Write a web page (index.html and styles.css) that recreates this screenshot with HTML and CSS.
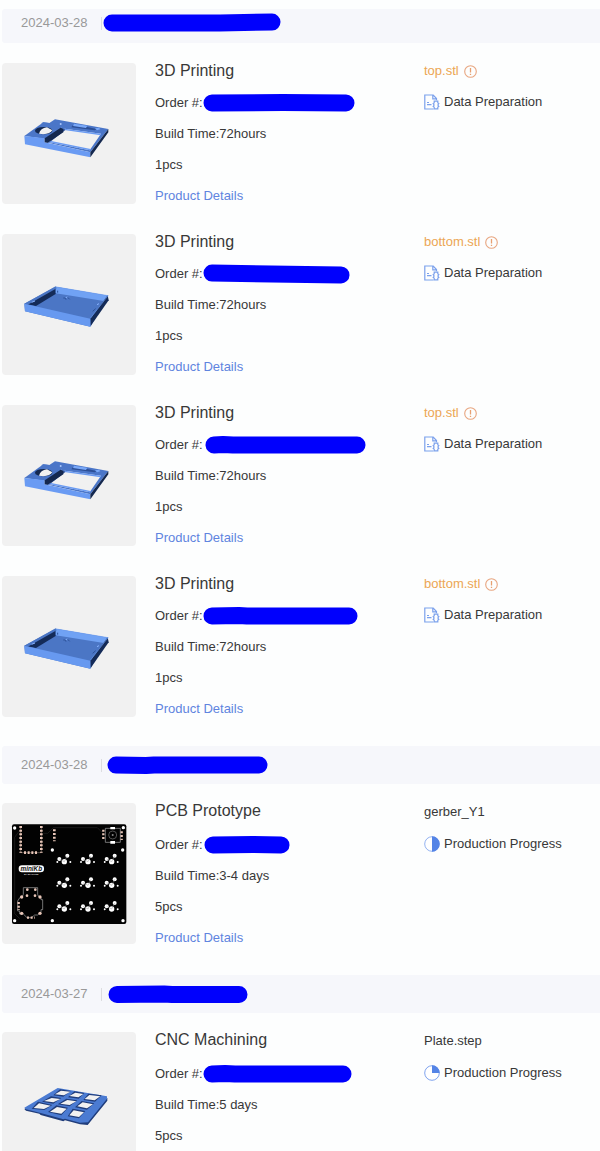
FILE: index.html
```html
<!DOCTYPE html>
<html lang="en">
<head>
<meta charset="utf-8">
<meta name="viewport" content="width=device-width, initial-scale=1">
<title>Orders</title>
<link rel="stylesheet" href="styles.css">
</head>
<body>
<svg class="sprite" aria-hidden="true">
  <symbol id="case-top" viewBox="6 -141 402 423">
    <path fill="#4b76c8" fill-rule="evenodd" d="M134 96 185 52 123 40 130 37 148 39 165 28 325 57 271 127zM146 96 194 56 303 71 269 121z"/>
    <path fill="#6a9bf3" d="M146 96 150 92 272 117 269 121zM194 56 303 71 302 76 192 60z"/>
    <path fill="#2c4f96" d="M192 56 196 60 153 94 146 96zM214 52 219 45 262 51 290 57 284 61z"/>
    <path fill="#4b76c8" d="M73 78 130 37 148 39 186 46 184 56 134 86z"/>
    <path fill="#6a9bf3" d="M73 78 134 85V97L271 127V142L75 103z"/>
    <path fill="#14284f" d="M134 85 182 53 190 57V67L143 98 134 97zM325 57V67L271 142V127z"/>
    <ellipse cx="131" cy="62" rx="26" ry="11" fill="#14284f"/>
    <path fill="#f1f1f1" d="M117 71Q121 55 141 52L157 61Q151 71 130 73z"/>
    <path fill="#79a8f8" d="M222 41 262 47 258 54 219 48zM285 55l12-2 4 5-10 3z"/>
    <circle cx="182" cy="42" r="3" fill="#a9c6fc"/>
  </symbol>
  <symbol id="case-bottom" viewBox="6 -108 402 423">
    <path fill="#4b76c5" d="M73 101 167 50 325 77 271 170 75 124z"/>
    <path fill="#142b58" d="M78 102 167 54 167 72 108 108z"/>
    <path fill="#70a2f4" d="M167 50 325 77 316 94 167 70z"/>
    <path fill="#142b58" d="M323 76 326 91 272 168 271 146z"/>
    <path fill="#4b76c5" d="M73 101 167 49 170 55 82 105z"/>
    <path fill="#6799f0" d="M73 101 271 146 271 170 75 124z"/>
    <path fill="none" stroke="#6d9df0" stroke-width="2" d="M169 51 324 77 271 145"/>
    <path fill="none" stroke="#2d529a" stroke-width="3" d="M190 84h6l2 5M203 82l6 6M173 62v6M278 124l9-8"/>
    <path fill="none" stroke="#8ab4ff" stroke-width="3" d="M197 83l5-2M291 104l6-3M95 97l10-4"/>
  </symbol>
  <symbol id="plate" viewBox="6 -111 402 423">
    <path fill="#203d7b" d="M73 120 173 60 322 87 322 95 263 168 240 166 195 154 190 157 122 138 118 134 78 125z"/>
    <path fill="#4b7bd2" d="M73 116 173 57 321 82 321 89 264 160 240 161 195 149 190 151 122 132 78 121z"/>
    <g fill="#203d7b">
      <path d="M180 61 212 66 190 83 160 79zM223 67 253 72 236 89 204 85zM265 74 305 79 285 98 250 93z"/>
      <path d="M153 82 184 87 160 104 126 98zM199 89 232 94 209 112 173 106zM245 96 283 103 261 122 225 115z"/>
      <path d="M114 98 157 108 133 123 95 119zM169 109 204 116 184 139 144 129zM218 119 256 126 237 148 203 142z"/>
    </g>
    <g fill="#f1f1f1">
      <path d="M183 65 211 68 192 79 165 76zM226 71 250 75 235 85 208 81zM268 78 301 82 284 94 254 90z"/>
      <path d="M155 87 181 90 160 100 132 96zM202 93 229 97 209 108 181 104zM248 100 279 106 261 118 232 112z"/>
      <path d="M117 103 152 110 132 120 101 117zM171 114 200 119 184 134 150 128zM221 124 252 130 237 144 208 139z"/>
    </g>
  </symbol>
  <symbol id="switch" viewBox="0 0 50 40">
    <g fill="#fff"><circle cx="10" cy="18" r="6"/><circle cx="34" cy="8" r="6"/><circle cx="25" cy="26" r="8"/><circle cx="4" cy="27" r="3"/><circle cx="43" cy="27" r="3"/></g>
    <path fill="none" stroke="#999" stroke-width="1.5" d="M10 18 25 26 34 8"/>
  </symbol>
  <symbol id="warn" viewBox="0 0 13 13">
    <circle cx="6.5" cy="6.5" r="5.8" fill="none" stroke="#e8a680" stroke-width="1.1"/>
    <path stroke="#e8a070" stroke-width="1.3" d="M6.5 3v4.600M6.500 8.800v1.300"/>
  </symbol>
  <symbol id="prep" viewBox="0 0 16 16">
    <g fill="none" stroke="#7ba1ec" stroke-width="1.2">
      <path d="M9.500 15H.8V1h8.400l3.300 3.500v1.800M8.800 1v3.800h3.700"/>
      <path d="M3 8.500h2M3 10.600h4.500"/>
      <path d="M10.200 7.200h3.600v1.700l1 .6-.9 1.500.9 1.500-1 .6v1.700h-3.600v-1.700l-1-.6.9-1.500-.9-1.500 1-.6z"/>
    </g>
  </symbol>
  <symbol id="half" viewBox="0 0 16 16">
    <circle cx="8" cy="8" r="7.300" fill="#fff" stroke="#93b2f1" stroke-width="1"/><path fill="#5484e6" d="M8 .3a7.700 7.700 0 0 1 0 15.400z"/>
  </symbol>
  <symbol id="quarter" viewBox="0 0 16 16">
    <circle cx="8" cy="8" r="7.300" fill="#fff" stroke="#7fa3ee" stroke-width="1"/><path fill="#5484e6" d="M8 .3A7.700 7.700 0 0 1 15.700 8H8z"/>
  </symbol>
</svg>

<main class="page">
  <section class="group">
    <header class="bar bar-first">
      <time class="date">2024-03-28</time><i class="divider"></i>
      <svg class="mark" width="180" height="20"><path d="M10 10H118L170 9"/></svg>
    </header>
    <article class="item">
      <div class="thumb"><svg><use href="#case-top"/></svg></div>
      <div class="lines">
        <h2 class="title">3D Printing</h2>
        <p class="order">Order #:<svg class="mark" width="152" height="20"><path d="M9 10 80 9.500 143 10"/></svg></p>
        <p>Build Time:72hours</p><p>1pcs</p><a class="link" href="#">Product Details</a>
      </div>
      <div class="lines">
        <p class="file alert">top.stl<svg class="warn"><use href="#warn"/></svg></p>
        <p class="status"><svg class="icon"><use href="#prep"/></svg>Data Preparation</p>
      </div>
    </article>
    <article class="item">
      <div class="thumb"><svg><use href="#case-bottom"/></svg></div>
      <div class="lines">
        <h2 class="title">3D Printing</h2>
        <p class="order">Order #:<svg class="mark" width="147" height="20"><path d="M9 9 138 11"/></svg></p>
        <p>Build Time:72hours</p><p>1pcs</p><a class="link" href="#">Product Details</a>
      </div>
      <div class="lines">
        <p class="file alert">bottom.stl<svg class="warn"><use href="#warn"/></svg></p>
        <p class="status"><svg class="icon"><use href="#prep"/></svg>Data Preparation</p>
      </div>
    </article>
    <article class="item">
      <div class="thumb"><svg><use href="#case-top"/></svg></div>
      <div class="lines">
        <h2 class="title">3D Printing</h2>
        <p class="order">Order #:<svg class="mark" width="163" height="20"><path d="M11 10 20 9.500 30 10H154"/></svg></p>
        <p>Build Time:72hours</p><p>1pcs</p><a class="link" href="#">Product Details</a>
      </div>
      <div class="lines">
        <p class="file alert">top.stl<svg class="warn"><use href="#warn"/></svg></p>
        <p class="status"><svg class="icon"><use href="#prep"/></svg>Data Preparation</p>
      </div>
    </article>
    <article class="item">
      <div class="thumb"><svg><use href="#case-bottom"/></svg></div>
      <div class="lines">
        <h2 class="title">3D Printing</h2>
        <p class="order">Order #:<svg class="mark" width="155" height="20"><path d="M9 10 36 9.500 44 10H146"/></svg></p>
        <p>Build Time:72hours</p><p>1pcs</p><a class="link" href="#">Product Details</a>
      </div>
      <div class="lines">
        <p class="file alert">bottom.stl<svg class="warn"><use href="#warn"/></svg></p>
        <p class="status"><svg class="icon"><use href="#prep"/></svg>Data Preparation</p>
      </div>
    </article>
  </section>

  <section class="group">
    <header class="bar">
      <time class="date">2024-03-28</time><i class="divider"></i>
      <svg class="mark" width="167" height="20"><path d="M14 10 44 10.500 52 10H157"/></svg>
    </header>
    <article class="item roomy">
      <div class="thumb">
        <svg viewBox="6 9 402 423">
          <rect x="36" y="73" width="343" height="299" rx="6" fill="#020202"/>
          <path fill="none" stroke="#252525" stroke-width="2" d="M44 342V112l13-18M130 100h13l17-17h132l14 14M45 342l14 14"/>
          <path fill="none" stroke="#806f67" stroke-width="2" d="M62 78V158H124V78"/>
          <path fill="none" stroke="#e7c5b7" stroke-width="8" stroke-dasharray="6 5" d="M62 78V158M124 78V158M72 158H116M163 88V124"/>
          <path fill="none" stroke="#aaa" stroke-width="2" d="M316 85H361V127H316z"/>
          <path fill="none" stroke="#e7c5b7" stroke-width="7" stroke-dasharray="6 5" d="M310 89V120M365 94V120"/>
          <path fill="#fff" d="M331 81h14v7h-14zM331 123h14v8h-14z"/>
          <circle cx="338" cy="105" r="12" fill="none" stroke="#777" stroke-width="2"/><circle cx="338" cy="105" r="3" fill="#888"/>
          <path fill="none" stroke="#aaa" stroke-width="2" d="M70 283V263H113V283Q113 290 123 293V299H128V329H123V337L113 345H104L94 353H81L70 342H59V333H53V303L60 292Q70 290 70 283"/>
          <path fill="none" stroke="#e7c5b7" stroke-width="7" stroke-dasharray="6 5" d="M56 306V330M81 353H105"/>
          <g fill="#e7c5b7"><circle cx="82" cy="269" r="4"/><circle cx="106" cy="269" r="4"/><circle cx="81" cy="287" r="4"/><circle cx="105" cy="287" r="4"/><circle cx="65" cy="291" r="5"/><circle cx="120" cy="291" r="5"/><circle cx="65" cy="340" r="5"/><circle cx="120" cy="340" r="5"/></g>
          <g fill="#fff"><circle cx="44" cy="84" r="5"/><circle cx="370" cy="83" r="5"/><circle cx="44" cy="362" r="5"/><circle cx="369" cy="362" r="5"/><circle cx="157" cy="150" r="5"/><circle cx="368" cy="150" r="5"/><circle cx="157" cy="362" r="5"/></g>
          <rect x="56" y="196" width="76" height="21" rx="10" fill="#fff"/>
          <text x="94" y="213" class="pcb-logo">miniKb</text>
          <text x="94" y="226" class="pcb-sub">BY MACHINE</text>
          <use href="#switch" x="168" y="159" width="50" height="40"/><use href="#switch" x="239" y="159" width="50" height="40"/><use href="#switch" x="310" y="159" width="50" height="40"/>
          <use href="#switch" x="168" y="230" width="50" height="40"/><use href="#switch" x="239" y="230" width="50" height="40"/><use href="#switch" x="310" y="230" width="50" height="40"/>
          <use href="#switch" x="168" y="301" width="50" height="40"/><use href="#switch" x="239" y="301" width="50" height="40"/><use href="#switch" x="310" y="301" width="50" height="40"/>
        </svg>
      </div>
      <div class="lines">
        <h2 class="title">PCB Prototype</h2>
        <p class="order">Order #:<svg class="mark" width="87" height="20"><path d="M10 10 50 9.500 78 10"/></svg></p>
        <p>Build Time:3-4 days</p><p>5pcs</p><a class="link" href="#">Product Details</a>
      </div>
      <div class="lines">
        <p class="file">gerber_Y1</p>
        <p class="status"><svg class="icon"><use href="#half"/></svg>Production Progress</p>
      </div>
    </article>
  </section>

  <section class="group">
    <header class="bar">
      <time class="date">2024-03-27</time><i class="divider"></i>
      <svg class="mark" width="147" height="20"><path d="M15 10.500 62 10 70 10.500H137"/></svg>
    </header>
    <article class="item roomy">
      <div class="thumb"><svg><use href="#plate"/></svg></div>
      <div class="lines">
        <h2 class="title">CNC Machining</h2>
        <p class="order">Order #:<svg class="mark" width="149" height="20"><path d="M9 10 22 9.500 32 10H140"/></svg></p>
        <p>Build Time:5 days</p><p>5pcs</p>
      </div>
      <div class="lines">
        <p class="file">Plate.step</p>
        <p class="status"><svg class="icon"><use href="#quarter"/></svg>Production Progress</p>
      </div>
    </article>
  </section>
</main>
</body>
</html>
```
FILE: styles.css
```css
* { box-sizing: border-box; }

body {
  margin: 0;
  background: #fdfefe;
  color: #383838;
  font: 13px/16px "Liberation Sans", Arial, sans-serif;
}

h2, p { margin: 0; }

.sprite {
  position: absolute;
  width: 0;
  height: 0;
}

.page {
  height: 100vh;
  overflow: hidden;
  padding: 9px 0 0 2px;
}

.group { margin-bottom: 29px; }

.bar {
  display: flex;
  align-items: center;
  height: 38px;
  margin-bottom: 19px;
  padding-left: 19px;
  border-radius: 3px 0 0 3px;
  background: #f6f7fb;
}

.bar-first {
  height: 34px;
  padding-bottom: 6px;
  margin-bottom: 20px;
}

.date {
  width: 80px;
  color: #999;
}

.divider {
  width: 1px;
  height: 13px;
  background: #dcdde0;
}

.mark {
  flex: none;
  fill: none;
  stroke: #0000fd;
  stroke-width: 17px;
  stroke-linecap: round;
  stroke-linejoin: round;
}

.item {
  display: grid;
  grid-template-columns: 134px 1fr 176px;
  align-items: start;
}

.item + .item { margin-top: 30px; }

.thumb {
  height: 141px;
  border-radius: 4px;
  background: #f1f1f1;
  overflow: hidden;
}

.thumb svg {
  display: block;
  width: 100%;
  height: 100%;
}

.lines {
  display: flex;
  flex-direction: column;
  align-items: flex-start;
  gap: 15px;
}

.thumb + .lines { padding-left: 19px; }

.title {
  font-size: 16px;
  font-weight: 400;
}

.order, .file, .status {
  display: flex;
  align-items: center;
  height: 16px;
}

.order { height: 17px; }

.roomy .title, .roomy .file { height: 18px; }

.link {
  color: #6084df;
  text-decoration: none;
}

.alert {
  gap: 5px;
  color: #eca654;
}

.warn {
  width: 13px;
  height: 13px;
}

.status { gap: 4px; }

.icon {
  width: 16px;
  height: 16px;
}

.pcb-logo {
  fill: #111;
  font: italic bold 19px "Liberation Sans", Arial, sans-serif;
  text-anchor: middle;
}

.pcb-sub {
  fill: #ddd;
  font: bold 7px "Liberation Sans", Arial, sans-serif;
  text-anchor: middle;
}
```
